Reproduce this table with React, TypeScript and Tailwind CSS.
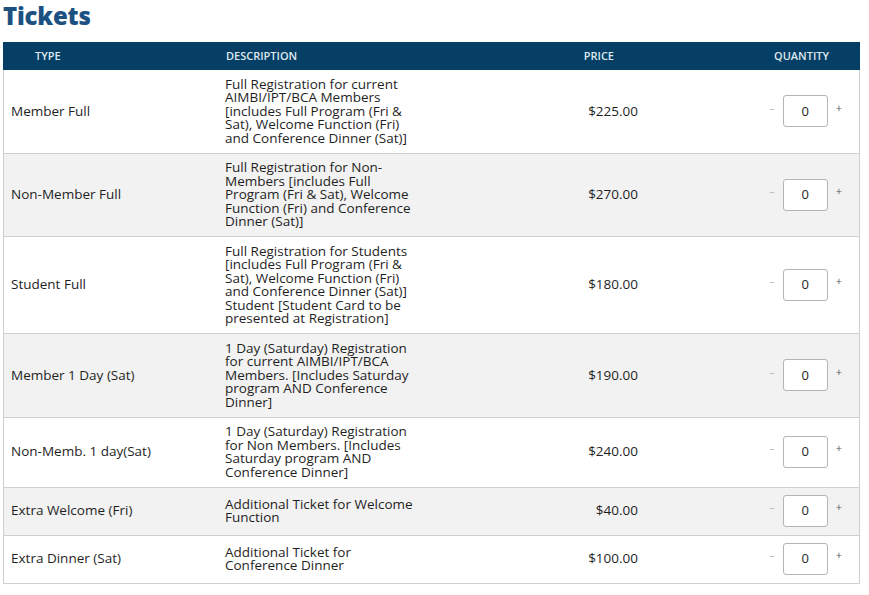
import React from 'react';

const tickets = [
  { type: 'Member Full', desc: 'Full Registration for current AIMBI/IPT/BCA Members [includes Full Program (Fri & Sat), Welcome Function (Fri) and Conference Dinner (Sat)]', price: '$225.00' },
  { type: 'Non-Member Full', desc: 'Full Registration for Non-Members [includes Full Program (Fri & Sat), Welcome Function (Fri) and Conference Dinner (Sat)]', price: '$270.00' },
  { type: 'Student Full', desc: 'Full Registration for Students [includes Full Program (Fri & Sat), Welcome Function (Fri) and Conference Dinner (Sat)] Student [Student Card to be presented at Registration]', price: '$180.00' },
  { type: 'Member 1 Day (Sat)', desc: '1 Day (Saturday) Registration for current AIMBI/IPT/BCA Members. [Includes Saturday program AND Conference Dinner]', price: '$190.00' },
  { type: 'Non-Memb. 1 day(Sat)', desc: '1 Day (Saturday) Registration for Non Members. [Includes Saturday program AND Conference Dinner]', price: '$240.00' },
  { type: 'Extra Welcome (Fri)', desc: 'Additional Ticket for Welcome Function', price: '$40.00' },
  { type: 'Extra Dinner (Sat)', desc: 'Additional Ticket for Conference Dinner', price: '$100.00' },
];

const App = () => {
  return (
    <div className="w-[869px] h-[595px] bg-white text-[#1f1f1f] font-['Open_Sans',sans-serif] pl-[3px]">
      <h1 className="h-[42px] pt-[2px] text-[24px] leading-[28px] font-extrabold text-[#1d5182] tracking-[-0.2px]">Tickets</h1>

      <div className="w-[857px] border-x border-b border-[#cfcfcf]">
        {/* header */}
        <div className="grid grid-cols-[214px_210px_220px_1fr] h-[28px] items-center bg-[#053f65] text-[11px] font-semibold text-[#dfe8ef] -mx-px">
          <div className="pl-[32px]">TYPE</div>
          <div className="pl-[9px]">DESCRIPTION</div>
          <div className="text-right pr-[33px]">PRICE</div>
          <div className="text-right pr-[31px]">QUANTITY</div>
        </div>

        {tickets.map((t, i) => (
          <div
            key={t.type}
            className={`grid grid-cols-[214px_210px_220px_1fr] items-center text-[13.5px] leading-[13.5px] py-[7.5px] ${i > 0 ? 'border-t border-[#cfcfcf]' : ''} ${i % 2 === 1 ? 'bg-[#f2f2f2]' : 'bg-white'}`}
          >
            <div className="pl-[7px]">{t.type}</div>
            <div className="pl-[7px] pr-[10px]">{t.desc}</div>
            <div className="text-right pr-[10px]">{t.price}</div>
            <div className="flex items-center justify-end pr-[17px]">
              <span className="text-[#bbb] text-[11px] -mt-[8px] mr-[8px]">–</span>
              <div className="w-[45px] h-[32px] border border-[#b5b5b5] rounded-[3px] bg-white flex items-center justify-center text-[13px]">0</div>
              <span className="text-[#555] text-[11px] -mt-[8px] ml-[8px]">+</span>
            </div>
          </div>
        ))}
      </div>
    </div>
  );
};

export default App;
